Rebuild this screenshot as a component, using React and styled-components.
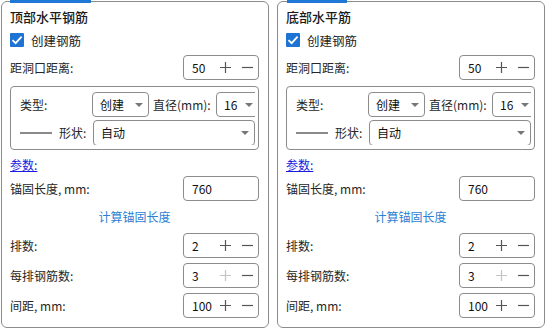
import React from "react";
import styled, { createGlobalStyle } from "styled-components";

const Global = createGlobalStyle`
  html, body { margin: 0; padding: 0; background: #fff; }
  body { font-family: "Noto Sans CJK SC", "Noto Sans", sans-serif; font-size: 12px; color: #222; }
  * { box-sizing: border-box; }
`;

const Page = styled.div`
  display: flex;
  gap: 8px;
  padding: 1px 0 0 1px;
`;

const Panel = styled.div`
  position: relative;
  width: 268px;
  height: 327px;
  border: 1px solid #8c8c8c;
  border-radius: 6px;
  padding: 5px 9px 0 8px;
  display: flex;
  flex-direction: column;
`;

const TabMark = styled.div`
  position: absolute;
  top: -2px;
  left: ${(p) => p.$left}px;
  width: ${(p) => p.$width}px;
  height: 3px;
  background: #1f78d6;
`;

const Title = styled.div`
  height: 20px;
  line-height: 20px;
  font-size: 13px;
  font-weight: 500;
  color: #1a1a1a;
`;

const CheckRow = styled.label`
  margin-top: 5px;
  height: 16px;
  display: flex;
  align-items: center;
  gap: 7px;
  font-size: 12.5px;
`;

const Check = styled.span`
  width: 14px;
  height: 14px;
  background: #1e74d3;
  border-radius: 1px;
  display: flex;
  align-items: center;
  justify-content: center;
`;

const Row = styled.div`
  margin-top: ${(p) => p.$mt}px;
  height: 25px;
  display: flex;
  align-items: center;
  justify-content: space-between;
`;

const Label = styled.span`
  font-size: 12px;
  color: #262626;
`;

const Spin = styled.div`
  width: 76px;
  height: 25px;
  border: 1px solid #8c8c8c;
  border-radius: 4px;
  display: flex;
  align-items: center;
  padding-left: 8px;
`;

const SpinValue = styled.span`
  flex: 1;
  font-size: 12px;
  color: #111;
`;

const SpinBtn = styled.span`
  width: 22px;
  height: 21px;
  display: flex;
  align-items: center;
  justify-content: center;
`;

const TextInput = styled.div`
  width: 76px;
  height: 25px;
  border: 1px solid #8c8c8c;
  border-radius: 4px;
  display: flex;
  align-items: center;
  padding-left: 8px;
  font-size: 12px;
  color: #111;
`;

const InnerBox = styled.div`
  margin-top: 6px;
  height: 64px;
  border: 1px solid #8c8c8c;
  border-radius: 4px;
  padding: 5px 3px 4px 9px;
  display: flex;
  flex-direction: column;
  gap: 3px;
  overflow: hidden;
`;

const InnerRow = styled.div`
  height: 26px;
  display: flex;
  align-items: center;
  overflow: hidden;
`;

const InnerLabel = styled.span`
  width: ${(p) => p.$w}px;
  padding-left: ${(p) => p.$pl || 0}px;
  flex: none;
  font-size: 12px;
  color: #262626;
`;

const Select = styled.div`
  flex: ${(p) => (p.$grow ? "1" : "none")};
  width: ${(p) => (p.$w ? p.$w + "px" : "auto")};
  height: ${(p) => p.$h || 25}px;
  border: 1px solid #8c8c8c;
  border-radius: 4px;
  display: flex;
  align-items: center;
  justify-content: space-between;
  padding: 0 ${(p) => p.$pr || 5}px 0 7px;
  font-size: 12px;
  color: #111;
`;

const Arrow = styled.span`
  width: 0;
  height: 0;
  border-left: 4px solid transparent;
  border-right: 4px solid transparent;
  border-top: 4px solid #777;
`;

const LineMark = styled.span`
  width: 32px;
  height: 2px;
  background: #8a8a8a;
  margin: 0 7px 0 0;
  flex: none;
`;

const Link = styled.a`
  margin-top: 7px;
  height: 16px;
  line-height: 16px;
  color: #1a1ae0;
  text-decoration: underline;
  font-size: 12px;
  align-self: flex-start;
`;

const Action = styled.div`
  margin-top: 8px;
  height: 16px;
  line-height: 16px;
  text-align: center;
  color: #2c7fd3;
  font-size: 12px;
`;

const Plus = ({ disabled }) => (
  <svg width="11" height="11" viewBox="0 0 11 11">
    <path d="M0 5.5H11M5.5 0V11" stroke={disabled ? "#c4c4c4" : "#555"} strokeWidth="1.2" />
  </svg>
);
const Minus = () => (
  <svg width="11" height="11" viewBox="0 0 11 11">
    <path d="M0 5.5H11" stroke="#555" strokeWidth="1.2" />
  </svg>
);

const SpinBox = ({ value, plusDisabled }) => (
  <Spin>
    <SpinValue>{value}</SpinValue>
    <SpinBtn><Plus disabled={plusDisabled} /></SpinBtn>
    <SpinBtn><Minus /></SpinBtn>
  </Spin>
);

const RebarPanel = ({ title, tabLeft, tabWidth }) => (
  <Panel>
    <TabMark $left={tabLeft} $width={tabWidth} />
    <Title>{title}</Title>
    <CheckRow>
      <Check>
        <svg width="12" height="12" viewBox="0 0 12 12">
          <path d="M1.5 6.2L4.6 9.2L10.6 2.6" fill="none" stroke="#fff" strokeWidth="1.8" />
        </svg>
      </Check>
      创建钢筋
    </CheckRow>
    <Row $mt={7}>
      <Label>距洞口距离:</Label>
      <SpinBox value="50" />
    </Row>
    <InnerBox>
      <InnerRow>
        <InnerLabel $w={72}>类型:</InnerLabel>
        <Select $w={57}>创建<Arrow /></Select>
        <InnerLabel $w={67} $pl={4}>直径(mm):</InnerLabel>
        <Select $w={54} $pr={16}>16<Arrow /></Select>
      </InnerRow>
      <InnerRow>
        <LineMark />
        <InnerLabel $w={34}>形状:</InnerLabel>
        <Select $grow $h={26}>自动<Arrow /></Select>
      </InnerRow>
    </InnerBox>
    <Link>参数:</Link>
    <Row $mt={3}>
      <Label>锚固长度, mm:</Label>
      <TextInput>760</TextInput>
    </Row>
    <Action>计算锚固长度</Action>
    <Row $mt={8}>
      <Label>排数:</Label>
      <SpinBox value="2" />
    </Row>
    <Row $mt={5}>
      <Label>每排钢筋数:</Label>
      <SpinBox value="3" plusDisabled />
    </Row>
    <Row $mt={5}>
      <Label>间距, mm:</Label>
      <SpinBox value="100" />
    </Row>
  </Panel>
);

export default function App() {
  return (
    <>
      <Global />
      <Page>
        <RebarPanel title="顶部水平钢筋" tabLeft={8} tabWidth={81} />
        <RebarPanel title="底部水平筋" tabLeft={9} tabWidth={60} />
      </Page>
    </>
  );
}
